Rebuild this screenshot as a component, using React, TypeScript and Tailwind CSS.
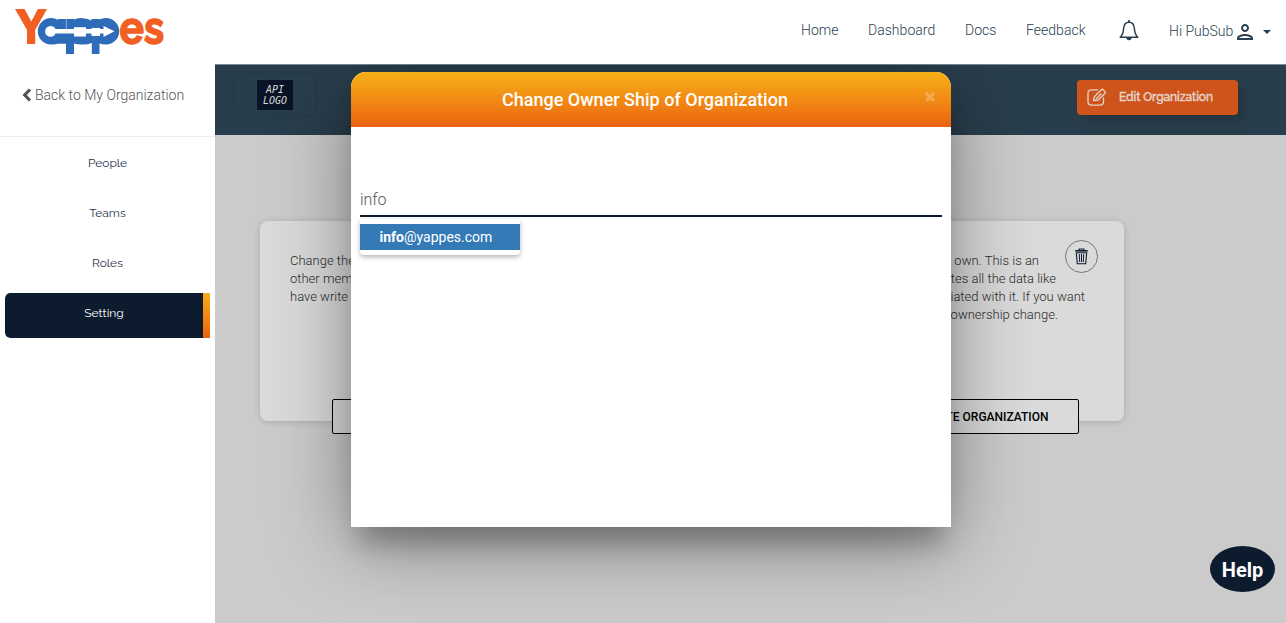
import React from "react";
import { MdOutlinePerson } from "react-icons/md";

function Logo() {
  return (
    <svg width="160" height="56" viewBox="14 0 160 56" aria-label="Yappes">
      <path d="M15 9H24.500L31.300 21.500L38 9H47L35.200 30V44H27V30Z" fill="#f16022" />
      <path
        d="M51 18Q55 18 58 20V19H74V19.500Q77 18 81 18Q87 18 91.500 20.500V19H99.500V19.500Q102 18 106 18A13.200 13.200 0 0 1 106 44.500Q102 44.500 99.500 43.500V54H91.800V43Q87 44.800 81 44.500Q77 44.500 74 43.500V54H66V43.800H58Q55 44.800 51 44.500A13.200 13.200 0 0 1 51 18Z"
        fill="#2e6cb9"
      />
      <path
        d="M55.500 29Q54 26 50.500 26A5.300 5.300 0 0 0 50.500 36.800Q54 36.800 55.500 33.500H74V36.500H86V33.500H91.500V36H100V33.500H103.500V37L114.500 31.300L103.500 26V29H100V28H91.500V29H86V27.200H74V29Z"
        fill="#fff"
      />
      <path d="M66.300 19V29" stroke="#a9c7e8" strokeWidth=".8" />
      <text
        x="119.500"
        y="43.500"
        fill="#f16022"
        stroke="#f16022"
        strokeWidth="1.500"
        fontFamily="Raleway, Lato, sans-serif"
        fontWeight="700"
        fontSize="46"
        textLength="44.500"
        lengthAdjust="spacingAndGlyphs"
      >
        es
      </text>
    </svg>
  );
}

function Bell() {
  return (
    <svg width="20" height="22" viewBox="0 0 20 22" fill="none" stroke="#2a4050" strokeWidth="1.500">
      <path d="M10 2.200C6.300 2.200 4.800 5 4.600 8.500C4.300 13 3.800 15 1.200 17.200H18.800C16.200 15 15.700 13 15.400 8.500C15.200 5 13.700 2.200 10 2.200Z" strokeLinejoin="round" />
      <path d="M10 .2V2" strokeWidth="2" />
      <path d="M7.300 17.800A2.600 2.300 0 0 0 12.700 17.800Z" fill="#2a4050" stroke="none" />
    </svg>
  );
}

function Trash() {
  return (
    <svg width="13" height="17" viewBox="0 0 13 17" fill="none" stroke="#0c1b2d">
      <path d="M.3 2.800H12.700" strokeWidth="1.600" />
      <path d="M4.200 2.200V1H8.800V2.200" strokeWidth="1.200" />
      <path d="M1.300 4.800L2.300 15.800H10.700L11.700 4.800Z" strokeWidth="1.100" />
      <path d="M4.300 6L4.700 14M6.500 6V14M8.700 6L8.300 14" strokeWidth="1" />
    </svg>
  );
}

function EditIcon() {
  return (
    <svg width="20" height="19" viewBox="0 0 20 19" fill="none" stroke="#e6d5cc" strokeWidth="1.300" strokeLinejoin="round" strokeLinecap="round">
      <path d="M10.500 1.800H4.500Q1 1.800 1 5.200V13.500Q1 17.200 4.500 17.200H13Q16.500 17.200 16.500 13.500V9.800" />
      <path d="M6.500 12.600L7.500 8.500L14.300 1.700Q15.200 .9 16.100 1.700L18 3.600Q18.700 4.400 18 5.200L11.200 12L6.500 12.600Z" />
      <path d="M9.500 10.500L14 6" />
    </svg>
  );
}

const navLinks = [
  { label: "Home", cls: "ml-[801px] w-[67px]" },
  { label: "Dashboard", cls: "w-[97px]" },
  { label: "Docs", cls: "w-[61px]" },
  { label: "Feedback", cls: "w-[93px]" },
];

function Header() {
  return (
    <header className="flex h-16 w-full shrink-0 bg-white">
      <div className="ml-3.5 -mr-[174px] w-[160px] shrink-0">
        <Logo />
      </div>
      <nav className="flex pt-5 text-sm leading-5 font-light text-[#2a4050]">
        {navLinks.map((l) => (
          <a key={l.label} className={`${l.cls} shrink-0 tracking-[0.03px] whitespace-nowrap`}>
            {l.label}
          </a>
        ))}
        <span className="w-[50px] shrink-0">
          <Bell />
        </span>
        <span className="flex h-6 items-center whitespace-nowrap">
          <span className="-mt-0.5">Hi PubSub</span>
          <MdOutlinePerson size={24} color="#2a4050" />
          <span className="ml-1.5 border-x-4 border-t-4 border-x-transparent border-t-[#2a4050]" />
        </span>
      </nav>
    </header>
  );
}

function Sidebar() {
  return (
    <aside className="w-[215px] shrink-0 bg-white">
      <div className="flex h-[73px] items-start border-b border-[#eee] pt-5 pl-[22px] text-[#555]">
        <svg width="10" height="14" viewBox="0 0 10 14" className="mt-1 mr-[3px]">
          <path d="M8 1.500L2.700 7L8 12.500" fill="none" stroke="#555" strokeWidth="3.200" />
        </svg>
        <span className="text-sm leading-[22px] font-light whitespace-nowrap">Back to My Organization</span>
      </div>
      <ul className="px-[5px] pt-1.5 text-center font-[Raleway,Lato,sans-serif] text-xs text-[#1f3247]">
        {["People", "Teams", "Roles"].map((t) => (
          <li key={t} className="mb-[5px] h-[45px] pt-[11px] leading-[18px]">
            {t}
          </li>
        ))}
        <li className="h-[45px] rounded-l-[5px] border-r-[7px] border-[#f09015] bg-[#0c1b2d] [border-image:linear-gradient(#f5b018,#eb6110)_1] [clip-path:inset(0_round_5px_0_0_5px)] pt-[11px] leading-[18px] text-white">
          Setting
        </li>
      </ul>
    </aside>
  );
}

function Card({ lines, button, btnCls, icon, textCls }: { lines: string[]; button: string; btnCls: string; icon?: boolean; textCls: string }) {
  return (
    <section className="relative flex h-[200px] w-[400px] justify-center rounded-[8px] bg-[#dadada] shadow-[0_1px_7px_rgba(0,0,0,0.16)]">
      <div className={`w-full pt-[31px] text-[13px] leading-[18px] font-light text-[#2b2b2b] ${textCls}`}>
        {lines.map((l) => (
          <p key={l} className="whitespace-nowrap">
            {l}
          </p>
        ))}
      </div>
      {icon && (
        <span className="absolute top-[19px] right-[26px] flex size-[33px] items-center justify-center rounded-full border border-[#777]">
          <Trash />
        </span>
      )}
      <button className={`absolute top-[178px] h-[35px] rounded-[2px] border border-black bg-[#dadada] text-xs font-medium text-black ${btnCls}`}>
        {button}
      </button>
    </section>
  );
}

function Modal() {
  return (
    <div className="absolute top-2 left-[136px] h-[455px] w-[600px] rounded-t-[15px] bg-white shadow-[0_25px_25px_-8px_rgba(0,0,0,0.22),0_15px_80px_0_rgba(0,0,0,0.4)]">
      <div className="relative flex h-[55px] items-center justify-center rounded-t-[15px] bg-linear-to-b from-[#f5b018] to-[#eb6110] pr-3">
        <h2 className="text-lg font-medium text-white">Change Owner Ship of Organization</h2>
        <svg width="12" height="12" viewBox="0 0 12 12" className="absolute top-[19px] right-[15px]">
          <path d="M2 2L10 10M10 2L2 10" stroke="#fff" strokeOpacity=".24" strokeWidth="3.200" />
        </svg>
      </div>
      <div className="px-[9px] pt-[60px]">
        <div className="h-[30px] border-b-2 border-[#0c1b2d] pt-px text-base leading-6 font-light tracking-[-0.1px] text-[#555]">info</div>
        <div className="mt-0.5 h-[36px] w-[160px] rounded bg-white py-[5px] shadow-[0_2px_5px_rgba(0,0,0,0.3)]">
          <div className="h-[26px] bg-[#337ab7] pl-[19.5px] text-sm leading-[26px] text-white">
            <b>info</b>@yappes.com
          </div>
        </div>
      </div>
    </div>
  );
}

function Main() {
  return (
    <main className="relative w-[1071px] overflow-hidden bg-[#cbcbcb]">
      <div className="flex h-[71px] justify-between border-t border-[#7b8a93] bg-[#293e4c] pt-[15px] pr-12 pl-5">
        <div className="-mt-[5px] flex h-10 w-20 justify-center rounded-lg pt-[5px] shadow-[0_0_5px_rgba(0,0,0,0.12)]">
          <div className="h-[30px] w-9 bg-[#091426] pt-1 text-center font-['DejaVu_Sans_Mono',monospace] text-[10px] leading-[11px] text-[#d8d8d8] italic">
            API
            <br />
            LOGO
          </div>
        </div>
        <button className="flex h-[35px] w-[161px] items-center rounded bg-[#ce541b] pl-[10px] font-[Raleway,sans-serif] text-xs font-medium text-[#e6d5cc] shadow-[6px_6px_14px_rgba(0,0,0,0.2)] [-webkit-text-stroke:0.4px_#e6d5cc]">
          <EditIcon />
          <span className="ml-3 pb-px tracking-[-0.1px] whitespace-nowrap">Edit Organization</span>
        </button>
      </div>
      <div className="flex gap-16 pt-[86px] pl-[45px]">
        <Card
          textCls="pl-[30px]"
          lines={["Change the ownership of this organization to", "other members of your organization who", "have write access."]}
          button="CHANGE OWNERSHIP"
          btnCls="w-[256px]"
        />
        <Card
          textCls="pl-[30px] [&>p]:flex [&>p]:justify-end [&>p:nth-child(1)]:pr-[85px] [&>p:nth-child(2)]:pr-[68px] [&>p:nth-child(3)]:pr-[39px] [&>p:nth-child(4)]:pr-[66px]"
          lines={["Delete the organization you own. This is an", "action which deletes all the data like", "APIs and teams associated with it. If you want", "to keep it, request an ownership change."]}
          button="DELETE ORGANIZATION"
          btnCls="w-[310px] pl-[118px]"
          icon
        />
      </div>
      <Modal />
      <button className="absolute top-[482px] right-[11px] flex h-[46px] w-[65px] items-center justify-center rounded-[50%] bg-[#0c1b2d] pt-0.5 text-xl font-bold text-white">
        Help
      </button>
    </main>
  );
}

export default function App() {
  return (
    <div className="flex h-[623px] w-[1286px] flex-col overflow-hidden bg-white font-[Roboto,sans-serif]">
      <Header />
      <div className="flex flex-1">
        <Sidebar />
        <Main />
      </div>
    </div>
  );
}
